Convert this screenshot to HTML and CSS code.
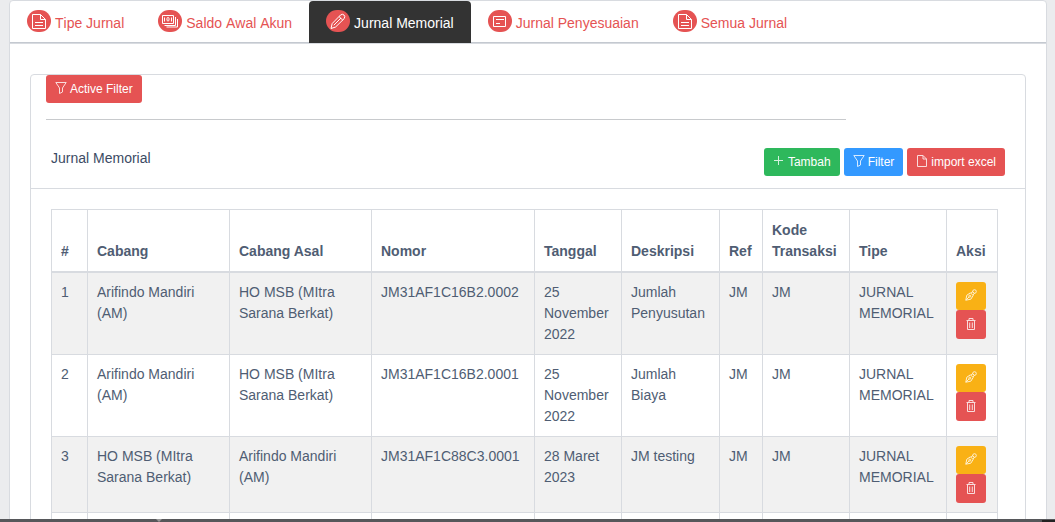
FILE: index.html
```html
<!DOCTYPE html>
<html lang="id">
<head>
<meta charset="utf-8">
<title>Jurnal Memorial</title>
<link rel="stylesheet" href="styles.css">
</head>
<body>
<svg class="sprite" aria-hidden="true">
  <symbol id="doc" viewBox="0 0 24 22"><path d="M5.500 4.500h8l5 5v9h-13zM13.500 4.500v5h5M8 12.500h8M8 15.500h8"/></symbol>
  <symbol id="money" viewBox="0 0 24 22"><path d="M4.500 5.500h11v8h-11zM17.500 7v8.500H6.500M19.500 9v8H8.500M6.500 7.500v4M13.500 7.500v4"/><rect x="9" y="7.500" width="2" height="3.500" rx="1"/></symbol>
  <symbol id="pencil" viewBox="0 0 24 22"><path d="M5 18.500l1.200-5L14.500 5q2-1.500 3.500 0t.2 3.600L9.600 17zM13 6.500l3.800 3.700M7.800 15.200L15 8"/></symbol>
  <symbol id="note" viewBox="0 0 24 22"><path d="M5.500 6.500h12v10h-12zM8 9.500h8M8 13.500h4"/></symbol>
  <symbol id="funnel" viewBox="0 0 12 12"><path d="M.8.500h10.400L7.500 6v4L4.500 11.500V6z"/></symbol>
  <symbol id="plus" viewBox="0 0 12 12"><path d="M5.500 1v9M1 5.500h9"/></symbol>
  <symbol id="file" viewBox="0 0 12 12"><path d="M1.500.500h5.500l3.500 3.500v7.500h-9zM7 .500V4h3.500"/></symbol>
  <symbol id="pen" viewBox="0 0 12 12"><path d="M.8 11.200l1-5L5.500 3.800l2.700 2.700-2.400 3.700zM.8 11.200l3.400-3.400M6 4.300L7.500 2.500l2 2-1.700 1.600"/><circle cx="4.800" cy="7.200" r="1"/><circle cx="9.500" cy="2.500" r="1.800"/></symbol>
  <symbol id="trash" viewBox="0 0 12 12"><path d="M1.500 2.500h9M4 2.500v-2h4v2M2.500 3v8.500h7V3M4.700 4.500v5.500M7.300 4.500v5.500"/></symbol>
</svg>
<main class="page">
  <section class="panel">
    <nav class="tabs">
      <a class="tab" href="#tipe"><svg class="badge"><use href="#doc"/></svg><span>Tipe Jurnal</span></a>
      <a class="tab" href="#saldo"><svg class="badge"><use href="#money"/></svg><span>Saldo Awal Akun</span></a>
      <a class="tab tab-active" href="#memorial" aria-current="page"><svg class="badge"><use href="#pencil"/></svg><span>Jurnal Memorial</span></a>
      <a class="tab" href="#penyesuaian"><svg class="badge"><use href="#note"/></svg><span>Jurnal Penyesuaian</span></a>
      <a class="tab" href="#semua"><svg class="badge"><use href="#doc"/></svg><span>Semua Jurnal</span></a>
    </nav>
    <div class="panel-body">
      <div class="card">
        <div class="active-filter">
          <button class="btn red" type="button"><svg class="icon"><use href="#funnel"/></svg>Active Filter</button>
          <hr class="rule">
        </div>
        <header class="card-head">
          <span>Jurnal Memorial</span>
          <div class="actions">
            <button class="btn green" type="button"><svg class="icon"><use href="#plus"/></svg>Tambah</button>
            <button class="btn blue" type="button"><svg class="icon"><use href="#funnel"/></svg>Filter</button>
            <button class="btn red" type="button"><svg class="icon"><use href="#file"/></svg>import excel</button>
          </div>
        </header>
        <div class="table-wrap">
          <table class="journal">
            <colgroup><col class="c-no"><col class="c-branch"><col class="c-branch"><col class="c-number"><col class="c-date"><col class="c-desc"><col class="c-ref"><col class="c-code"><col class="c-type"><col class="c-act"></colgroup>
            <thead><tr><th>#</th><th>Cabang</th><th>Cabang Asal</th><th>Nomor</th><th>Tanggal</th><th>Deskripsi</th><th>Ref</th><th>Kode Transaksi</th><th>Tipe</th><th>Aksi</th></tr></thead>
            <tbody>
              <tr><td>1</td><td>Arifindo Mandiri (AM)</td><td>HO MSB (MItra Sarana Berkat)</td><td>JM31AF1C16B2.0002</td><td>25 November 2022</td><td>Jumlah Penyusutan</td><td>JM</td><td>JM</td><td>JURNAL MEMORIAL</td><td><div class="row-actions"><button class="btn amber" type="button" aria-label="Edit"><svg class="icon"><use href="#pen"/></svg></button><button class="btn red" type="button" aria-label="Hapus"><svg class="icon"><use href="#trash"/></svg></button></div></td></tr>
              <tr><td>2</td><td>Arifindo Mandiri (AM)</td><td>HO MSB (MItra Sarana Berkat)</td><td>JM31AF1C16B2.0001</td><td>25 November 2022</td><td>Jumlah Biaya</td><td>JM</td><td>JM</td><td>JURNAL MEMORIAL</td><td><div class="row-actions"><button class="btn amber" type="button" aria-label="Edit"><svg class="icon"><use href="#pen"/></svg></button><button class="btn red" type="button" aria-label="Hapus"><svg class="icon"><use href="#trash"/></svg></button></div></td></tr>
              <tr><td>3</td><td>HO MSB (MItra Sarana Berkat)</td><td>Arifindo Mandiri (AM)</td><td>JM31AF1C88C3.0001</td><td>28 Maret 2023</td><td>JM testing</td><td>JM</td><td>JM</td><td>JURNAL MEMORIAL</td><td><div class="row-actions"><button class="btn amber" type="button" aria-label="Edit"><svg class="icon"><use href="#pen"/></svg></button><button class="btn red" type="button" aria-label="Hapus"><svg class="icon"><use href="#trash"/></svg></button></div></td></tr>
              <tr><td></td><td></td><td></td><td></td><td></td><td></td><td></td><td></td><td></td><td></td></tr>
            </tbody>
          </table>
        </div>
      </div>
    </div>
  </section>
</main>
<div class="dock"><span class="dock-arrow"></span><span class="dock-end"></span></div>
</body>
</html>
```
FILE: styles.css
```css
* { box-sizing: border-box; }
body {
  margin: 0;
  height: 100vh;
  display: flex;
  flex-direction: column;
  background: #ebecee;
  color: #4f5d73;
  font: 14px/21px "Liberation Sans", Arial, sans-serif;
}
.sprite { display: none; }
symbol { fill: none; stroke: currentColor; stroke-width: 1; }
.page {
  flex: 1;
  min-height: 0;
  padding: 0 8px 0 9px;
  overflow-y: auto;
  scrollbar-width: none;
}
.panel {
  border: 1px solid #d8dbe0;
  border-radius: 4px;
  background: #fff;
}
.tabs {
  display: flex;
  border-bottom: 1px solid #c4c9d0;
  font-kerning: none;
}
.tab {
  display: flex;
  align-items: flex-start;
  gap: 4px;
  height: 41px;
  padding: 9px 17px 0;
  color: #e55353;
  text-decoration: none;
}
.tab span { padding-top: 3px; }
.tab-active {
  height: 42px;
  margin-bottom: -1px;
  border-radius: 4px 4px 0 0;
  background: #333;
  color: #fff;
}
.badge {
  width: 24px;
  height: 22px;
  border-radius: 11px;
  background: #e55353;
  color: #fff;
}
.panel-body {
  padding: 30px 20px;
  border-top: 1px solid #d8dbe0;
}
.card {
  border: 1px solid #d8dbe0;
  border-radius: 4px;
}
.active-filter { padding: 0 15px; }
.rule {
  width: 83%;
  margin: 16px 0;
  border: 0;
  border-top: 1px solid #c8cacd;
}
.card-head {
  display: flex;
  align-items: center;
  justify-content: space-between;
  padding: 12px 20px;
  border-bottom: 1px solid #d8dbe0;
  color: #3c4b64;
}
.card-head > span { padding-bottom: 7px; }
.actions { display: flex; gap: 4px; }
.btn {
  display: flex;
  align-items: center;
  justify-content: center;
  gap: 3px;
  height: 28px;
  padding: 0 9px;
  border: 0;
  border-radius: 3px;
  color: #fff;
  font: 12px/18px "Liberation Sans", Arial, sans-serif;
}
.icon { width: 12px; height: 12px; margin-bottom: 2px; opacity: .8; }
.red { background: #e55353; }
.green { background: #2eb85c; }
.blue { background: #39f; }
.amber { background: #f9b115; }
.table-wrap { padding: 20px 27px 20px 20px; }
.journal {
  width: 100%;
  table-layout: fixed;
  border-collapse: collapse;
}
.journal th, .journal td {
  padding: 9px;
  border: 1px solid #d8dbe0;
  text-align: left;
  vertical-align: top;
}
.journal th {
  padding-top: 10px;
  border-bottom-width: 2px;
  vertical-align: bottom;
}
.journal td { height: 39px; }
.journal tbody tr:nth-child(odd) { background: #f1f1f1; }
.c-no { width: 36px; }
.c-branch { width: 142px; }
.c-number { width: 163px; }
.c-date, .c-code { width: 87px; }
.c-desc { width: 98px; }
.c-ref { width: 43px; }
.c-type { width: 97px; }
.c-act { width: 51px; }
.row-actions { display: flex; flex-direction: column; width: 30px; }
.row-actions .red { height: 29px; }
.dock {
  display: flex;
  justify-content: space-between;
  height: 3px;
  background: #56575a;
}
.dock-arrow {
  margin-left: 156px;
  border: 3px solid transparent;
  border-top-color: #999;
  border-bottom: 0;
}
.dock-end { width: 13px; margin-top: 1px; background: #222; }
```
